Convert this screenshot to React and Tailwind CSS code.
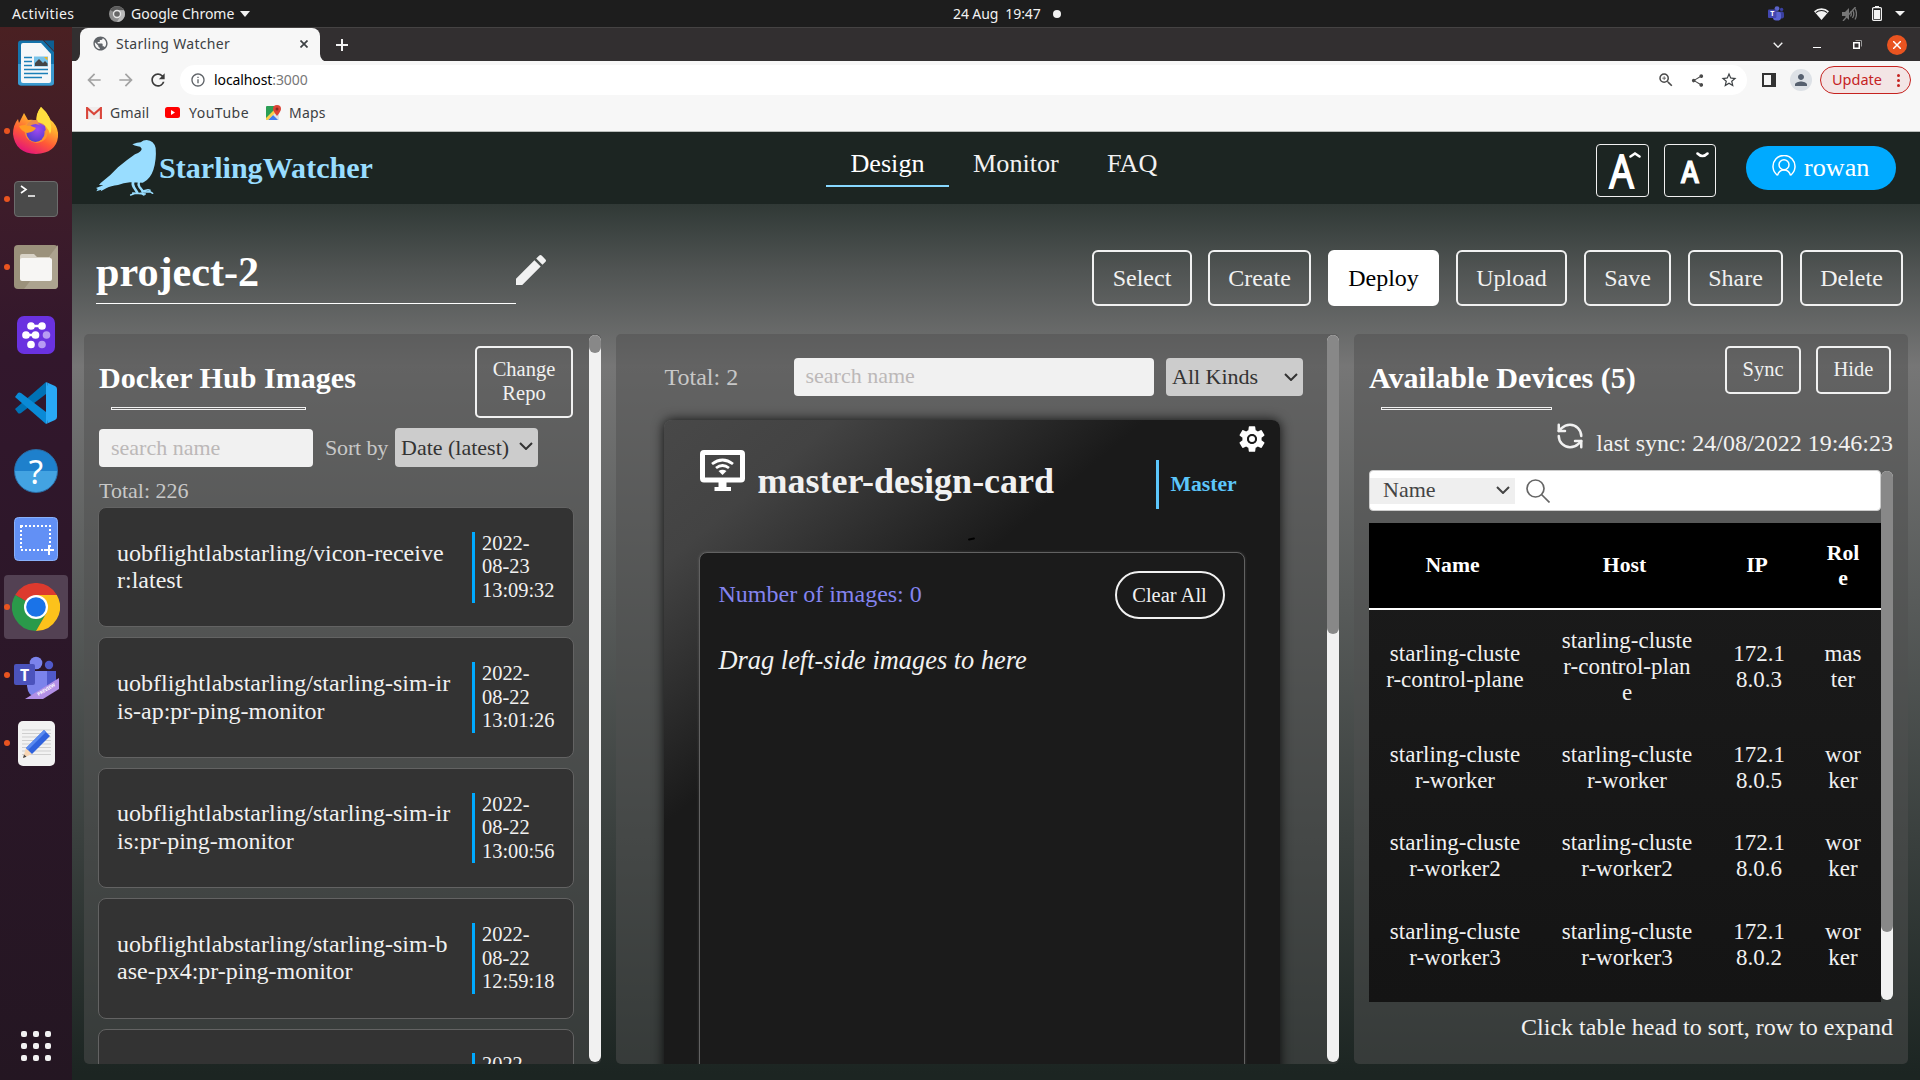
import React from "react";
import { RefreshCcw } from "lucide-react";
import { MdEdit, MdSettings, MdPublic, MdArrowBack, MdArrowForward, MdRefresh, MdInfoOutline, MdZoomIn, MdShare, MdStarBorder, MdPerson } from "react-icons/md";

const images = [
  { name: ["uobflightlabstarling/vicon-receive", "r:latest"], date: ["2022-", "08-23", "13:09:32"] },
  { name: ["uobflightlabstarling/starling-sim-ir", "is-ap:pr-ping-monitor"], date: ["2022-", "08-22", "13:01:26"] },
  { name: ["uobflightlabstarling/starling-sim-ir", "is:pr-ping-monitor"], date: ["2022-", "08-22", "13:00:56"] },
  { name: ["uobflightlabstarling/starling-sim-b", "ase-px4:pr-ping-monitor"], date: ["2022-", "08-22", "12:59:18"] },
  { name: [], date: ["2022-", "08-22"] },
];

const devices = [
  { name: ["starling-cluste", "r-control-plane"], host: ["starling-cluste", "r-control-plan", "e"], ip: ["172.1", "8.0.3"], role: ["mas", "ter"] },
  { name: ["starling-cluste", "r-worker"], host: ["starling-cluste", "r-worker"], ip: ["172.1", "8.0.5"], role: ["wor", "ker"] },
  { name: ["starling-cluste", "r-worker2"], host: ["starling-cluste", "r-worker2"], ip: ["172.1", "8.0.6"], role: ["wor", "ker"] },
  { name: ["starling-cluste", "r-worker3"], host: ["starling-cluste", "r-worker3"], ip: ["172.1", "8.0.2"], role: ["wor", "ker"] },
];

const Lines = ({ items }) => items.map((t) => <div key={t}>{t}</div>);

const Chevron = ({ className }) => (
  <svg viewBox="0 0 14 8" className={className} fill="none" stroke="currentColor" strokeWidth="2">
    <path d="M1 1l6 6 6-6" />
  </svg>
);

/* ---------- desktop top bar ---------- */

function TopBar() {
  return (
    <div className="flex h-[27px] items-center bg-[#1d1d1d] text-[14px] leading-[27px] text-[#f2f2f2]">
      <span className="ml-3 w-[97px] tracking-[0.4px]">Activities</span>
      <svg viewBox="0 0 16 16" className="h-4 w-4">
        <circle cx="8" cy="8" r="8" fill="#8d8d8d" />
        <path d="M8 8L1.2 4A8 8 0 0 1 15 4.2H8z" fill="#5c5c5c" />
        <path d="M8 8l3.4 2L8 16a8 8 0 0 0 7-11.8H8z" fill="#b9b9b9" />
        <circle cx="8" cy="8" r="4.2" fill="#e6e6e6" />
        <circle cx="8" cy="8" r="2.8" fill="#666" />
      </svg>
      <span className="ml-[6px] w-[109px] whitespace-nowrap">Google Chrome</span>
      <svg viewBox="0 0 10 6" className="h-[6px] w-[10px]" fill="#f2f2f2"><path d="M0 0h10L5 6z" /></svg>
      <span className="ml-[703px] w-[100px] whitespace-pre tracking-[-0.1px]">24 Aug  19:47</span>
      <span className="h-2 w-2 rounded-full bg-[#f2f2f2]" />
      <div className="mr-[15px] ml-auto flex items-center">
        <svg viewBox="0 0 16 15" className="h-[15px] w-4">
          <circle cx="9" cy="2.6" r="2.4" fill="#5b63c9" />
          <circle cx="13.6" cy="3.4" r="1.7" fill="#3a40a0" />
          <rect x="11" y="5.6" width="5" height="7" rx="2" fill="#3a40a0" />
          <rect x="5" y="5.6" width="8" height="9" rx="3" fill="#5b63d3" />
          <rect x="0" y="3.6" width="8.4" height="8.4" rx="1" fill="#4347b0" />
          <text x="4.2" y="10.2" fontSize="7" fontWeight="700" fill="#fff" textAnchor="middle">T</text>
        </svg>
        <svg viewBox="0 0 15 12" className="ml-[30px] h-3 w-[15px]">
          <path d="M0 3.2a11 11 0 0 1 15 0L7.5 12z" fill="#f2f2f2" />
          <path d="M1.8 4.6a9 9 0 0 1 11.4 0" fill="none" stroke="#1d1d1d" strokeWidth="1.1" />
        </svg>
        <svg viewBox="0 0 16 14" className="ml-[12px] h-[14px] w-4" fill="none" stroke="#777">
          <path d="M1 5h3l4-4v12L4 9H1z" fill="#777" stroke="none" />
          <path d="M9.5 4.5q1.6 2.5 0 5M11.5 3q2.6 4 0 8M14 1.5q3 5.500 0 11" strokeWidth="1.3" />
          <path d="M14.500 0L2 14" strokeWidth="1.3" />
        </svg>
        <svg viewBox="0 0 10 15" className="ml-[15px] h-[15px] w-[10px]">
          <rect x="3" y="0" width="4" height="2" fill="#f2f2f2" />
          <rect x="0.600" y="1.600" width="8.800" height="12.800" rx="1" fill="none" stroke="#f2f2f2" strokeWidth="1.200" />
          <rect x="2" y="4" width="6" height="9" fill="#f2f2f2" />
        </svg>
        <svg viewBox="0 0 10 5" className="ml-[13px] h-[5px] w-[10px]" fill="#f2f2f2"><path d="M0 0h10L5 5z" /></svg>
      </div>
    </div>
  );
}

/* ---------- dock ---------- */

function WriterIcon() {
  return (
    <svg viewBox="0 0 36 46" className="h-[46px] w-9">
      <path d="M3 .5h22L36 12v30.500q0 3-3 3H3q-3 0-3-3V3.500q0-3 3-3z" fill="#1573ab" />
      <path d="M0 24h36v18.500q0 3-3 3H3q-3 0-3-3z" fill="#3b9ad0" />
      <path d="M5 3h18l10 11v27q0 2-2 2H5q-2 0-2-2V5q0-2 2-2z" fill="#f5f7f9" />
      <path d="M26 .5h10V11z" fill="#0d5f93" />
      <g stroke="#1b7fb8" strokeWidth="1.700"><path d="M6 17.500h8M6 21.500h8M6 25.500h8M6 29.500h24M6 33.500h24M6 37.500h18" /></g>
      <rect x="16" y="16.500" width="14" height="10" fill="#76c3ea" />
      <path d="M17 26v-3l4-4 4 4 2-2 2.500 2.500V26z" fill="#454545" />
      <path d="M26 17h3.500v3.500z" fill="#f2b31b" />
    </svg>
  );
}

function FirefoxIcon() {
  return (
    <svg viewBox="0 0 46 48" className="h-12 w-[46px]">
      <defs>
        <linearGradient id="ff1" x1=".8" y1="0" x2=".3" y2="1">
          <stop offset="0" stopColor="#fff14a" /><stop offset=".35" stopColor="#ffb02e" /><stop offset=".65" stopColor="#ff5a36" /><stop offset="1" stopColor="#e3127c" />
        </linearGradient>
        <radialGradient id="ff2" cx=".6" cy=".3" r=".8"><stop offset="0" stopColor="#a04af0" /><stop offset="1" stopColor="#4a3ac8" /></radialGradient>
      </defs>
      <path d="M28 0q5 5 8 10 1 3 4 5 6 7 5 15-2 16-22 17Q2 46 0 27q0-9 5-15l1 4 5-10 4 7q5-1 8 1 1-9 5-14z" fill="url(#ff1)" />
      <circle cx="22.500" cy="23.500" r="10.500" fill="url(#ff2)" />
      <path d="M23 13q5 1 8 6-3-3-6-3 6 6 1 11 6-1 8-7 3 14-10 16-10-1-12-9-2-6 8-4 4-1 3-3-8-2-12-1 5-6 11-6z" fill="#ff9a2e" opacity=".85" />
      <circle cx="22.500" cy="26" r="9" fill="url(#ff2)" />
      <path d="M6 19q8-3 17 2-2 4-9 5-6-2-8-7z" fill="#ff9c24" />
      <path d="M28 0q-7 9-3 15 9 2 12 12 3-6-1-17Q33 4 28 0z" fill="#ffdf3f" />
    </svg>
  );
}

const dockItems = [
  { id: "writer", dot: false, icon: <WriterIcon /> },
  { id: "firefox", dot: true, icon: <FirefoxIcon /> },
  {
    id: "terminal", dot: true,
    icon: (
      <svg viewBox="0 0 44 36" className="h-9 w-11">
        <rect x=".5" y=".5" width="43" height="35" rx="3.500" fill="#4a4a4a" stroke="#6d6d6d" />
        <path d="M7 5l5 3.500L7 12M14 15h7" fill="none" stroke="#fff" strokeWidth="1.600" />
      </svg>
    ),
  },
  {
    id: "files", dot: true,
    icon: (
      <svg viewBox="0 0 44 44" className="h-11 w-11">
        <rect width="44" height="44" rx="4" fill="#9b917b" />
        <path d="M44 0v40q0 4-4 4H10z" fill="#aca38f" />
        <path d="M6 11q0-2 2-2h12l3 3h13v6H6z" fill="#d8d2c6" />
        <rect x="6" y="13" width="32" height="23" rx="2" fill="#f7f6f4" />
      </svg>
    ),
  },
  {
    id: "graph", dot: false,
    icon: (
      <svg viewBox="0 0 38 38" className="h-[38px] w-[38px]">
        <rect width="38" height="38" rx="7" fill="#6a32e0" />
        <g fill="#fff" stroke="#fff" strokeWidth="2.500">
          <circle cx="14" cy="10" r="2.600" /><circle cx="25" cy="10" r="2.600" /><path d="M14 10h11M9 19h9" />
          <circle cx="9" cy="19" r="2.600" /><circle cx="18.500" cy="19" r="2.600" /><circle cx="14" cy="28.500" r="2.600" />
        </g>
        <circle cx="29.500" cy="19" r="3.800" fill="#b79bf3" /><circle cx="25" cy="28.500" r="3.800" fill="#b79bf3" />
      </svg>
    ),
  },
  {
    id: "code", dot: false,
    icon: (
      <svg viewBox="0 0 42 42" className="h-[42px] w-[42px]">
        <path d="M31 0L0 27l3 4q1 1 3 0L31 12z" fill="#0072b5" />
        <path d="M31 42L0 15l3-4q1-1 3 0l25 19z" fill="#0a8ad6" />
        <path d="M31 0l9 4q2 1 2 3v28q0 2-2 3l-9 4q2-1 2-4V4q0-3-2-4z" fill="#29a9f5" />
        <path d="M31 0q2 1 2 4v34q0 3-2 4z" fill="#29a9f5" />
      </svg>
    ),
  },
  {
    id: "help", dot: false,
    icon: (
      <div className="flex h-11 w-11 items-center justify-center rounded-full border border-[#2a6ea8] bg-linear-to-b from-[#1e80cc] from-50% to-[#43a3e2] to-50% text-[33px] leading-none text-white">?</div>
    ),
  },
  {
    id: "screenshot", dot: false,
    icon: (
      <svg viewBox="0 0 44 44" className="h-11 w-11">
        <rect x=".5" y=".5" width="43" height="43" rx="4" fill="#6290f5" stroke="#89b0fa" />
        <rect x="7" y="9" width="29" height="24" fill="none" stroke="#fff" strokeWidth="2" strokeDasharray="2 2" />
        <path d="M35 28v10M30 33h10" stroke="#fff" strokeWidth="2" />
      </svg>
    ),
  },
  {
    id: "chrome", dot: true, active: true,
    icon: (
      <svg viewBox="0 0 48 48" className="h-12 w-12">
        <path d="M24 24L3.200 12A24 24 0 0 1 44.800 12z" fill="#dd3a2e" />
        <path d="M24 24L3.200 12A24 24 0 0 0 24 48l10.400-18z" fill="#2a9a4a" />
        <path d="M24 12h20.800A24 24 0 0 1 24 48l10.400-18z" fill="#fcc21b" />
        <circle cx="24" cy="24" r="12" fill="#fff" />
        <circle cx="24" cy="24" r="9.800" fill="#1a73e8" />
      </svg>
    ),
  },
  {
    id: "teams", dot: true,
    icon: (
      <svg viewBox="0 0 46 44" className="mt-[5px] h-11 w-[46px]">
        <circle cx="23" cy="7" r="6.300" fill="#7b83eb" /><circle cx="36" cy="9" r="4.200" fill="#5059c9" />
        <path d="M30 15h13v14q-1 8-7 8t-6-6z" fill="#5059c9" />
        <path d="M14 15h20v14q-1 12-10 12T14 30z" fill="#7b83eb" />
        <rect x="1" y="8" width="21" height="21" rx="2" fill="#4b53bc" />
        <text x="11.500" y="24.500" fontSize="16" fontWeight="700" fill="#fff" textAnchor="middle">T</text>
        <path d="M12 43l34-21v11L30 43z" fill="#b28fe6" />
        <text transform="translate(25.500 40) rotate(-31)" fontSize="4.600" fontWeight="700" fill="#fff" textLength="20">PREVIEW</text>
      </svg>
    ),
  },
  {
    id: "notes", dot: true,
    icon: (
      <svg viewBox="0 0 37 45" className="h-[45px] w-[37px]">
        <rect width="37" height="45" rx="5" fill="#f2f2f2" />
        <path d="M4 9h29M4 12.500h29M4 16h29M4 19.500h29M4 23h29M4 26.500h29M4 30h29M4 33.500h29" stroke="#cfcfcf" strokeWidth="1" />
        <path d="M5 37l3-10 6 6z" fill="#f7d5b4" /><path d="M5 37l1-3.500 2.500 2.300z" fill="#444" />
        <path d="M8 27L26 9l6 6-18 18z" fill="#2f62dd" /><path d="M8 27L26 9l2 2-18 18z" fill="#5a8af0" />
      </svg>
    ),
  },
];

function Dock() {
  return (
    <div className="flex h-[1053px] w-[72px] shrink-0 flex-col bg-[linear-gradient(180deg,#4a2022_0px,#3d1c2a_180px,#32172c_330px,#2c1729_600px,#241622_1053px)] pt-[2px]">
      {dockItems.map((d) => (
        <div key={d.id} className="relative flex h-[68px] items-center justify-center">
          {d.active && <div className="absolute inset-x-1 inset-y-0.5 rounded-[4px] bg-[#534153]" />}
          {d.dot && <div className="absolute left-1 h-[6px] w-[6px] rounded-full bg-[#e95420]" />}
          <div className="relative">{d.icon}</div>
        </div>
      ))}
      <div className="mt-auto mb-[19px] ml-[21px] grid w-[30px] grid-cols-3 gap-[6px]">
        {[...Array(9).keys()].map((i) => <div key={i} className="h-[6px] w-[6px] rounded-[2px] bg-[#f2f2f2]" />)}
      </div>
    </div>
  );
}

/* ---------- browser chrome ---------- */

function Browser() {
  return (
    <div className="h-[105px] text-[14px] text-[#3c4043]">
      <div className="flex h-[34px] items-center border-t border-[#454343] bg-[#322f30]">
        <div className="relative ml-2 flex h-[34px] w-[240px] items-center rounded-t-[8px] bg-[#f7f7f7] pb-[2px]">
          <svg viewBox="0 0 8 8" className="absolute bottom-0 -left-2 h-2 w-2" fill="#f7f7f7"><path d="M8 0v8H0a8 8 0 0 0 8-8z" /></svg>
          <svg viewBox="0 0 8 8" className="absolute -right-2 bottom-0 h-2 w-2" fill="#f7f7f7"><path d="M0 0v8h8a8 8 0 0 1-8-8z" /></svg>
          <MdPublic className="ml-[12px] h-[17px] w-[17px] text-[#5f6368]" />
          <span className="ml-[7px] w-[184px] whitespace-nowrap tracking-[0.3px]">Starling Watcher</span>
          <svg viewBox="0 0 8 8" className="h-2 w-2 shrink-0" stroke="#3c4043" strokeWidth="1.700"><path d="M.5.5l7 7M7.500.5l-7 7" /></svg>
        </div>
        <svg viewBox="0 0 12 12" className="ml-4 h-3 w-3" stroke="#f2f2f2" strokeWidth="2"><path d="M6 0v12M0 6h12" /></svg>
        <Chevron className="ml-auto h-[6px] w-[10px] text-[#f2f2f2]" />
        <div className="mt-[5px] ml-[30px] h-px w-2 bg-white" />
        <svg viewBox="0 0 9 9" className="ml-8 h-[9px] w-[9px]" fill="none"><path d="M2.500 .5h6v6" stroke="#999" /><rect x=".75" y="2.750" width="5.500" height="5.500" stroke="#fff" strokeWidth="1.500" /></svg>
        <div className="mr-[13px] ml-[25px] flex h-5 w-5 items-center justify-center rounded-full bg-[#e95420]">
          <svg viewBox="0 0 8 8" className="h-2 w-2" stroke="#fff" strokeWidth="1.500"><path d="M0 0l8 8M8 0L0 8" /></svg>
        </div>
      </div>
      <div className="flex h-[38px] items-center bg-[#f7f7f7]">
        <MdArrowBack className="ml-3 h-5 w-5 text-[#a3a3a3]" />
        <MdArrowForward className="ml-3 h-5 w-5 text-[#a3a3a3]" />
        <MdRefresh className="ml-3 h-5 w-5 text-[#3c3c3c]" />
        <div className="ml-3 flex h-[30px] w-[1567px] items-center rounded-full bg-white">
          <MdInfoOutline className="ml-[10px] h-4 w-4 text-[#5f6368]" />
          <span className="ml-2 pb-[2px] text-[14px] tracking-[-0.1px] text-black">localhost<span className="text-[#777]">:3000</span></span>
          <MdZoomIn className="ml-auto h-[18px] w-[18px] text-[#4a4a4a]" />
          <MdShare className="ml-[15px] h-[15px] w-[15px] text-[#4a4a4a]" />
          <MdStarBorder className="mr-[9px] ml-[15px] h-[18px] w-[18px] text-[#3c4043]" />
        </div>
        <div className="ml-[15px] h-[14px] w-[14px] border-2 border-r-[5px] border-[#333]" />
        <div className="ml-[14px] flex h-[22px] w-[22px] items-center justify-center rounded-full bg-[#dde1e6] text-[#56606f]"><MdPerson className="h-[18px] w-[18px]" /></div>
        <div className="ml-2 flex h-7 w-[91px] items-center rounded-full border border-[#c5221f] bg-[#f3e5e5] pl-[11px] text-[14.5px] text-[#c5221f]">
          <span className="w-[62px] pb-px">Update</span>
          <span className="ml-[3px] flex flex-col gap-[2px]"><i className="h-[3px] w-[3px] rounded-full bg-[#c5221f]" /><i className="h-[3px] w-[3px] rounded-full bg-[#c5221f]" /><i className="h-[3px] w-[3px] rounded-full bg-[#c5221f]" /></span>
        </div>
      </div>
      <div className="flex h-[33px] items-center border-b border-[#b9bdbb] bg-[#f7f7f7] pb-1.5">
        <svg viewBox="0 0 16 12" className="mt-px ml-[14px] h-3 w-4">
          <rect x="1" y="0" width="14" height="12" fill="#f0eded" />
          <path d="M1.100 12V1L8 7l6.900-6v11" fill="none" stroke="#d9453a" strokeWidth="2.100" />
        </svg>
        <span className="ml-2 w-[55px] tracking-[0.2px]">Gmail</span>
        <svg viewBox="0 0 15 11" className="h-[11px] w-[15px]"><rect width="15" height="11" rx="2.500" fill="#f00" /><path d="M6 3l4 2.500L6 8z" fill="#fff" /></svg>
        <span className="ml-[9px] w-[77px] whitespace-nowrap tracking-[0.5px]">YouTube</span>
        <svg viewBox="0 0 15 15" className="h-[15px] w-[15px]">
          <rect y="1" width="13" height="14" rx="1" fill="#2b9f55" />
          <path d="M0 15L13 3v12z" fill="#dfe3e6" /><path d="M2 15l5-5 5 5z" fill="#3f7df0" /><path d="M0 13L10 3l2 2L2 15H0z" fill="#fcd04a" />
          <path d="M11 0a4 4 0 0 1 4 4q0 2-4 7-4-5-4-7a4 4 0 0 1 4-4z" fill="#dc4437" /><circle cx="11" cy="4" r="1.500" fill="#8c2a22" />
        </svg>
        <span className="ml-2 tracking-[0.2px]">Maps</span>
      </div>
    </div>
  );
}

/* ---------- site header ---------- */

const Bird = () => (
  <svg viewBox="0 0 210 192" className="ml-[18px] h-16 w-[70px] shrink-0" fill="#99ddff">
    <path d="M127 25Q142 19 152 19 160 12 170 12 192 14 197 36 200 70 190 102 181 128 162 138L158 140 120 139Q100 141 84 147 62 150 50 156L32 166 34 161 19 166 23 159 18 156 40 148 27 147 32 141Q62 119 84 94 110 72 135 55 156 46 155 38 152 31 143 31 133 30 127 25z" />
    <g fill="none" stroke="#99ddff" strokeLinecap="round" strokeLinejoin="round">
      <path d="M130 136q-4 10 2 18l10 16" strokeWidth="8" /><path d="M147 136q-3 10 1 16l10 13" strokeWidth="7" />
      <path d="M122 177l14-5 18 1 8 4M140 172l-12-1M156 166l18-5 6 2M156 168l24-1 8 5M150 172l16 2" strokeWidth="4.500" />
    </g>
  </svg>
);

function Header() {
  return (
    <div className="flex h-[72px] bg-[#1c2522] text-[26.2px] text-[#f1f1f1]">
      <div className="flex w-[754px] pt-1">
        <Bird />
        <span className="mt-[15px] -ml-px text-[30.1px] leading-[34px] font-bold text-[#99ddff]">StarlingWatcher</span>
      </div>
      <nav className="flex pt-[15px] leading-[34px]">
        <div className="h-10 w-[123px] border-b-2 border-[#87d8ff] text-center text-white">Design</div>
        <div className="w-[135px] pl-6">Monitor</div>
        <div className="pl-[23px]">FAQ</div>
      </nav>
      <div className="mr-6 ml-auto flex pt-3">
        <div className="relative h-[53px] w-[53px] rounded-[4px] border border-[#f1f1f1]">
          <span className="absolute inset-x-0 top-[2px] -ml-[2px] origin-center scale-x-85 text-center font-['Open_Sans'] text-[45px] leading-[47px] text-white [-webkit-text-stroke:1.8px_white]">A</span>
          <svg viewBox="0 0 12 6" className="absolute top-[7px] right-[7px] h-[6px] w-3" fill="none" stroke="#fff" strokeWidth="2.500" strokeLinecap="round"><path d="M1.500 4.500L6 1.500 10.500 4.500" /></svg>
        </div>
        <div className="relative ml-[15px] h-[53px] w-[52px] rounded-[4px] border border-[#f1f1f1]">
          <span className="absolute inset-x-0 top-[11px] origin-center scale-x-90 text-center font-['Open_Sans'] text-[30px] leading-[31px] font-semibold text-white [-webkit-text-stroke:1.2px_white]">A</span>
          <svg viewBox="0 0 13 6" className="absolute top-[7px] right-[6px] h-[6px] w-[13px]" fill="none" stroke="#fff" strokeWidth="2.500" strokeLinecap="round"><path d="M1.500 1.500Q6.500 6.500 11.500 1.500" /></svg>
        </div>
        <div className="mt-[2px] ml-[30px] flex h-11 w-[150px] items-center rounded-full bg-[#00aaff] pl-[26px] text-white">
          <svg viewBox="0 0 24 24" className="-mt-[2px] h-6 w-6" fill="none" stroke="#fff" strokeWidth="1.500">
            <path d="M5.500 20.300A11 11 0 1 1 18.500 20.300M5.500 20.300Q7 15 12 15t6.500 5.300" /><circle cx="12" cy="9.800" r="5" />
          </svg>
          <span className="ml-2">rowan</span>
        </div>
      </div>
    </div>
  );
}

/* ---------- panels ---------- */

function ScrollBar({ thumb }) {
  return (
    <div className="mt-px mb-[2px] w-3 shrink-0 rounded-full bg-[#f1f1f1]">
      <div className="w-3 rounded-full bg-[#888]" style={{ height: thumb }} />
    </div>
  );
}

const Heading = ({ text, line }) => (
  <div className="pt-[15px]">
    <h2 className="text-[30.1px] leading-[34px] font-bold whitespace-nowrap text-white">{text}</h2>
    <div className={"mt-3 ml-3 h-[3px] border border-[#f1f1f1] " + line} />
  </div>
);

function ImagesPanel() {
  return (
    <section className="flex w-[517px] overflow-hidden rounded-[5px] bg-[#505050]/50">
      <div className="w-[505px] overflow-hidden pt-3 pl-[15px]">
        <div className="flex h-[72px] w-[474px] justify-between">
          <Heading text="Docker Hub Images" line="w-[195px]" />
          <button className="h-[72px] w-[98px] rounded-[5px] border-2 border-[#f1f1f1] pb-[2px] text-[20.5px] leading-6 text-[#f1f1f1]">Change<br />Repo</button>
        </div>
        <div className="mt-[10px] flex h-[39px] items-center text-[22px] text-[#c8c8c8]">
          <div className="mt-px h-[38px] w-[214px] rounded-[4px] bg-[#f1f1f1] pl-3 leading-[38px] text-[#bcb8b8]">search name</div>
          <span className="ml-3 w-[70px] tracking-[-0.15px]">Sort by</span>
          <div className="flex h-[39px] w-[143px] items-center justify-between rounded-[4px] bg-[#ccc] pr-[5px] pl-[6px] whitespace-nowrap text-[#333]">
            Date (latest)
            <Chevron className="mb-[3px] h-2 w-[14px] shrink-0" />
          </div>
        </div>
        <div className="mt-[11px] text-[22px] leading-[26px] text-[#c8c8c8]">Total: 226</div>
        <div className="mt-[3px] -ml-[1px] flex flex-col gap-[10px]">
          {images.map((im, i) => (
            <div key={i} className="flex h-[120.4px] w-[476px] shrink-0 items-center rounded-[8px] border border-[#636363] bg-[#333] text-[#f1f1f1]">
              <div className="w-[355px] pl-[18px] text-[24px] leading-[27.6px]"><Lines items={im.name} /></div>
              <div className="ml-[18px] h-[70.8px] border-l-[3px] border-[#00aaff] pl-[7px] text-[20.4px] leading-[23.6px]"><Lines items={im.date} /></div>
            </div>
          ))}
        </div>
      </div>
      <ScrollBar thumb={18} />
    </section>
  );
}

function DesignPanel() {
  return (
    <section className="ml-[15px] flex w-[723px] overflow-hidden rounded-[5px] bg-[#505050]/50">
      <div className="w-[711px] overflow-hidden pt-6 pl-[47.5px]">
        <div className="flex h-[38px] items-center text-[22px]">
          <span className="w-[130.5px] pl-px text-[24px] text-[#c8c8c8]">Total: 2</span>
          <div className="h-[38px] w-[360px] rounded-[4px] bg-[#f1f1f1] pl-[11.5px] leading-[36px] text-[#bcb8b8]">search name</div>
          <div className="ml-3 flex h-[38px] w-[137px] items-center justify-between rounded-[4px] bg-[#ccc] pr-[5px] pb-[2px] pl-[6px] text-[#333]">
            All Kinds
            <Chevron className="mt-px h-2 w-[14px]" />
          </div>
        </div>
        <div className="relative mt-6 h-[680px] w-[616px] rounded-[8px] bg-[linear-gradient(140deg,#484848_0px,#434343_110px,#1a1a1a_310px)] pl-9 shadow-[0_0_12px_rgba(0,0,0,0.85)]">
          <div className="flex h-[132px] pt-[30px]">
            <svg viewBox="0 0 45 42" className="h-[42px] w-[45px]" fill="none" stroke="#fff">
              <path d="M4 0h37q4 0 4 4v24.500q0 4-4 4H4q-4 0-4-4V4Q0 0 4 0zM5 5v22.500h35V5z" fill="#fff" fillRule="evenodd" stroke="none" />
              <path d="M18.500 32h8v5h4.500v4H14.500v-4h4z" fill="#fff" stroke="none" />
              <path d="M12 14q10.500-8 21 0M16 18q6.500-5 13 0" strokeWidth="2.800" />
              <path d="M18.500 21q4-2.500 8 0l-4 4z" fill="#fff" stroke="none" />
            </svg>
            <h2 className="ml-[13px] w-[398px] text-[36px] leading-[62px] font-bold text-[#f1f1f1]">master-design-card</h2>
            <div className="mt-[10px] h-[49px] border-l-[3px] border-[#5cc6fb] pl-3 text-[21.7px] leading-[48px] font-bold text-[#5cc6fb]">Master</div>
          </div>
          <div className="absolute top-[118px] left-[304px] h-[2px] w-[7px] -rotate-12 rounded-full bg-black" />
          <MdSettings className="absolute top-[3px] right-[12px] h-8 w-8 text-white" />
          <div className="absolute top-[14px] right-[23px] h-[10px] w-[10px] rounded-full border-2 border-[#1a1a1a] bg-white" />
          <div className="-ml-px h-[560px] w-[546px] rounded-[8px] border border-[#626262] bg-[#1b1b1b] px-[19px] pt-[18px] shadow-[0_0_3px_rgba(255,255,255,0.15)]">
            <div className="flex h-12 items-center justify-between text-[24px] text-[#8484f0]">
              <span className="pb-[2px]">Number of images: 0</span>
              <button className="h-12 w-[110px] rounded-[24px] border-2 border-[#f1f1f1] text-[20.5px] text-[#f1f1f1]">Clear All</button>
            </div>
            <div className="mt-[26px] text-[26.4px] leading-[30px] text-[#f1f1f1] italic">Drag left-side images to here</div>
          </div>
        </div>
      </div>
      <ScrollBar thumb={299} />
    </section>
  );
}

function DevicesPanel() {
  return (
    <section className="ml-[15px] w-[554px] rounded-[5px] bg-[#505050]/50 pt-3 pl-[15px] text-[#f1f1f1]">
      <div className="flex h-16 w-[522px]">
        <Heading text="Available Devices (5)" line="w-[171px]" />
        <button className="ml-auto h-12 w-[76px] rounded-[5px] border-2 border-[#f1f1f1] pb-[2px] text-[20.5px]">Sync</button>
        <button className="ml-[15px] h-12 w-[75px] rounded-[5px] border-2 border-[#f1f1f1] pb-[2px] text-[20.5px]">Hide</button>
      </div>
      <div className="flex h-[60px] w-[524px] justify-end">
        <RefreshCcw className="mt-[11px] h-[30px] w-[30px]" strokeWidth={2} />
        <span className="mt-[19px] ml-[11px] text-[24px] leading-7">last sync: 24/08/2022 19:46:23</span>
      </div>
      <div className="flex h-[532px]">
        <div className="w-[512px]">
          <div className="flex h-[41px] items-center rounded-[4px] border border-[#ccc] bg-white text-[22px] text-[#444]">
            <div className="flex h-[26px] w-[145px] items-center justify-between bg-[#efefef] pr-[5px] pb-[2px] pl-[13px]">Name<Chevron className="h-2 w-[14px]" /></div>
            <svg viewBox="0 0 24 24" className="ml-[11px] h-6 w-6" fill="none" stroke="#666" strokeWidth="1.700"><circle cx="9.500" cy="9.500" r="8.500" /><path d="M15.500 15.500l8 8" /></svg>
          </div>
          <div className="mt-3 h-[479px] overflow-hidden bg-linear-to-b from-[#1b1b1b] to-[#141414]">
            <div className="grid h-[87px] grid-cols-[167px_177px_88px_80px] items-center border-b-2 border-white bg-black text-center text-[21.7px] leading-[24.5px] font-bold text-white">
              <div>Name</div><div>Host</div><div>IP</div><div className="pl-1">Rol<br />e</div>
            </div>
            {devices.map((d) => (
              <div key={d.name[1]} className="grid grid-cols-[172px_172px_92px_76px] items-center py-[18.1px] text-center text-[23px] leading-[26px]">
                <div><Lines items={d.name} /></div><div><Lines items={d.host} /></div><div><Lines items={d.ip} /></div><div><Lines items={d.role} /></div>
              </div>
            ))}
          </div>
        </div>
        <div className="flex"><ScrollBar thumb={461} /></div>
      </div>
      <div className="mt-[10px] w-[524px] text-right text-[24px] leading-[30px]">Click table head to sort, row to expand</div>
    </section>
  );
}

const actions = [
  { t: "Select", c: "w-[100px] mr-4" },
  { t: "Create", c: "w-[103px] mr-[17px]" },
  { t: "Deploy", c: "w-[111px] mr-[17px]", on: true },
  { t: "Upload", c: "w-[111px] mr-[17px]" },
  { t: "Save", c: "w-[87px] mr-[17px]" },
  { t: "Share", c: "w-[95px] mr-[17px]" },
  { t: "Delete", c: "w-[103px]" },
];

export default function App() {
  return (
    <div className="h-[1080px] w-[1920px] overflow-hidden bg-[#1c2522] font-['Noto_Sans','Open_Sans',sans-serif]">
      <TopBar />
      <div className="flex">
        <Dock />
        <div className="w-[1848px]">
          <Browser />
          <div className="font-['Liberation_Serif',serif]">
            <Header />
            <main className="h-[876px] bg-[linear-gradient(180deg,#303936_0px,#505453_66px,#767676_162px,#1c2522_870px)]">
              <div className="flex h-[130px] pl-6">
                <div className="mt-[44px] h-[56px] w-[420px] border-b border-white text-[42.2px] leading-[47px] font-bold text-white">project-2</div>
                <MdEdit className="mt-[46px] -ml-[5px] h-10 w-10 text-[#f1f1f1]" />
                <div className="mt-[46px] mr-[17px] ml-auto flex text-[24px]">
                  {actions.map((a) => (
                    <button key={a.t} className={"h-14 rounded-[6px] border-2 " + a.c + (a.on ? " border-white bg-white text-black" : " border-[#f1f1f1] text-[#f1f1f1]")}>{a.t}</button>
                  ))}
                </div>
              </div>
              <div className="flex h-[730px] pl-3">
                <ImagesPanel />
                <DesignPanel />
                <DevicesPanel />
              </div>
            </main>
          </div>
        </div>
      </div>
    </div>
  );
}
